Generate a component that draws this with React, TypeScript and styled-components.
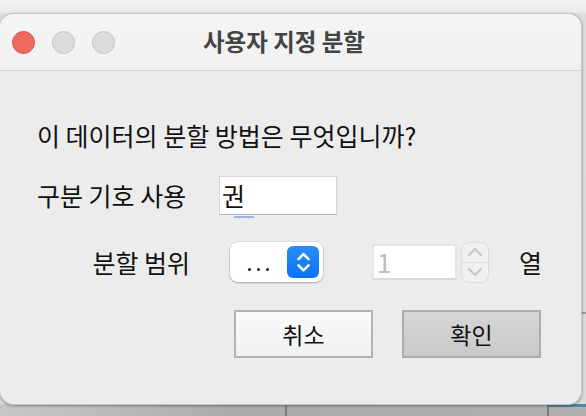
import styled, { createGlobalStyle } from 'styled-components';

const GlobalStyle = createGlobalStyle`
  html, body {
    margin: 0;
    padding: 0;
  }
  body {
    width: 586px;
    height: 416px;
    overflow: hidden;
    font-family: 'Noto Sans CJK KR', 'Noto Sans', sans-serif;
  }
`;

const Desktop = styled.div`
  width: 586px;
  height: 416px;
  display: flex;
  flex-direction: column;
  background:
    linear-gradient(to bottom, transparent 312px, #9a9a9a 312px, #9a9a9a 314px, transparent 314px),
    linear-gradient(to bottom, #f4f4f4 0, #e9e9e9 13px, #dcdcdc 14px, #dadada 100%);
`;

const TopGap = styled.div`
  height: 13px;
  flex: none;
`;

const Window = styled.div`
  width: 582px;
  height: 392px;
  flex: none;
  box-sizing: border-box;
  border: 1px solid #c4c4c4;
  border-left: none;
  border-radius: 14px;
  background: #ececec;
  overflow: hidden;
  display: flex;
  flex-direction: column;
  box-shadow: 0 1px 3px rgba(0, 0, 0, 0.35);
  position: relative;
  z-index: 1;
`;

const TitleBar = styled.div`
  height: 57px;
  flex: none;
  box-sizing: border-box;
  background: linear-gradient(to bottom, #f5f5f5, #f1f1f1);
  border-bottom: 1px solid #d2d2d2;
  display: flex;
  align-items: center;
  padding-left: 12px;
`;

const Lights = styled.div`
  display: flex;
  gap: 17px;
  padding-top: 1px;
`;

const Light = styled.span<{ $color: string; $edge: string }>`
  width: 23px;
  height: 23px;
  border-radius: 50%;
  box-sizing: border-box;
  background: ${(p) => p.$color};
  border: 1px solid ${(p) => p.$edge};
`;

const Title = styled.div`
  flex: 1;
  text-align: center;
  font-size: 23.5px;
  font-weight: 700;
  color: #444;
  margin-left: -128px;
  line-height: 1;
`;

const Body = styled.div`
  flex: 1;
  display: flex;
  flex-direction: column;
  padding: 40px 0 0 37px;
  color: #111;
  font-size: 25px;
`;

const Question = styled.div`
  height: 48px;
  line-height: 48px;
`;

const FormRow = styled.div<{ $height: number }>`
  display: flex;
  align-items: center;
  height: ${(p) => p.$height}px;
`;

const Label = styled.div<{ $width: number; $align?: string }>`
  width: ${(p) => p.$width}px;
  text-align: ${(p) => p.$align || 'left'};
  line-height: 1;
  flex: none;
`;

const TextField = styled.div`
  width: 118px;
  height: 39px;
  box-sizing: border-box;
  background: #fff;
  border: 1px solid #d6d6d6;
  border-bottom-color: #b9b9b9;
  padding-left: 2px;
  display: flex;
  align-items: center;
  margin-top: 1px;
`;

const Marked = styled.span`
  line-height: 1;
  color: #111;
  position: relative;
  &::after {
    content: '';
    position: absolute;
    left: 12px;
    width: 20px;
    bottom: -10px;
    height: 2px;
    background: #9ab4e6;
  }
`;

const Popup = styled.div`
  width: 93px;
  height: 40px;
  box-sizing: border-box;
  background: #fff;
  border-radius: 8px;
  box-shadow: 0 0 0 0.5px rgba(0, 0, 0, 0.12), 0 1px 2px rgba(0, 0, 0, 0.25);
  display: flex;
  align-items: center;
  justify-content: space-between;
  padding: 0 4px 0 18px;
  margin-left: 40px;
  flex: none;
`;

const Dots = styled.span`
  display: flex;
  gap: 6px;
  padding-top: 14px;
  & > i {
    width: 3px;
    height: 3px;
    border-radius: 50%;
    background: #222;
  }
`;

const BlueStepper = styled.span`
  width: 32px;
  height: 32px;
  border-radius: 6px;
  background: linear-gradient(to bottom, #2b8bfb, #0a74f5);
  display: flex;
  align-items: center;
  justify-content: center;
`;

const NumberField = styled.div`
  width: 85px;
  height: 36px;
  box-sizing: border-box;
  background: #fff;
  border: 2px solid #e6e6e6;
  border-bottom-color: #dadada;
  color: #bdbdbd;
  font-size: 26px;
  padding-left: 3px;
  display: flex;
  align-items: center;
  line-height: 1;
  margin-left: 49px;
  flex: none;
`;

const Stepper = styled.div`
  width: 28px;
  height: 41px;
  box-sizing: border-box;
  border: 1px solid #dddddd;
  border-radius: 8px;
  background: #f0f0f0;
  display: flex;
  flex-direction: column;
  margin-left: 4px;
  flex: none;
  & > span {
    flex: 1;
    display: flex;
    align-items: center;
    justify-content: center;
  }
  & > span + span {
    border-top: 1px solid #dcdcdc;
  }
`;

const Unit = styled.div`
  margin-left: 30px;
  line-height: 1;
`;

const ButtonRow = styled.div`
  display: flex;
  gap: 29px;
  padding-left: 197px;
  margin-top: 17px;
`;

const Button = styled.div<{ $primary?: boolean }>`
  width: 139px;
  height: 48px;
  box-sizing: border-box;
  border: 2px solid ${(p) => (p.$primary ? '#adadad' : '#b3b3b3')};
  background: ${(p) =>
    p.$primary ? 'linear-gradient(to bottom, #d6d6d6, #c9c9c9)' : 'linear-gradient(to bottom, #fafafa, #f1f1f1)'};
  display: flex;
  align-items: center;
  justify-content: center;
  font-size: 23px;
  color: #111;
  line-height: 1;
`;

const BottomStrip = styled.div`
  flex: 1;
  margin-top: -1px;
  display: grid;
  grid-template-columns: 285px 262px 1fr;
  background: linear-gradient(to right, #c8c8c8, #ababab 40%, #b0b0b0);
  & > div + div {
    border-left: 2px solid #7d7d7d;
  }
  & > div:last-child {
    background: linear-gradient(to bottom, #4d86a8 0, #4d86a8 3px, transparent 3px);
  }
`;

function Chevrons({ color, size }: { color: string; size: number }) {
  return (
    <svg width={size} height={size * 1.5} viewBox="0 0 12 18" fill="none">
      <path d="M2 6.5 6 2.5l4 4M2 11.5 6 15.5l4-4" stroke={color} strokeWidth="2" strokeLinecap="round" strokeLinejoin="round" />
    </svg>
  );
}

function Chevron({ up }: { up?: boolean }) {
  return (
    <svg width="16" height="10" viewBox="0 0 16 10" fill="none">
      <path d={up ? 'M2 8 8 2l6 6' : 'M2 2l6 6 6-6'} stroke="#c6c6c6" strokeWidth="2" strokeLinecap="round" strokeLinejoin="round" />
    </svg>
  );
}

export default function App() {
  return (
    <>
      <GlobalStyle />
      <Desktop>
        <TopGap />
        <Window>
          <TitleBar>
            <Lights>
              <Light $color="#ee6a5e" $edge="#d5584d" />
              <Light $color="#dcdcdc" $edge="#c6c6c6" />
              <Light $color="#dcdcdc" $edge="#c6c6c6" />
            </Lights>
            <Title>사용자 지정 분할</Title>
          </TitleBar>
          <Body>
            <Question>이 데이터의 분할 방법은 무엇입니까?</Question>
            <FormRow $height={72}>
              <Label $width={182}>구분 기호 사용</Label>
              <TextField>
                <Marked>권</Marked>
              </TextField>
            </FormRow>
            <FormRow $height={62}>
              <Label $width={153} $align="right">
                분할 범위
              </Label>
              <Popup>
                <Dots>
                  <i />
                  <i />
                  <i />
                </Dots>
                <BlueStepper>
                  <Chevrons color="#fff" size={15} />
                </BlueStepper>
              </Popup>
              <NumberField>1</NumberField>
              <Stepper>
                <span>
                  <Chevron up />
                </span>
                <span>
                  <Chevron />
                </span>
              </Stepper>
              <Unit>열</Unit>
            </FormRow>
            <ButtonRow>
              <Button>취소</Button>
              <Button $primary>확인</Button>
            </ButtonRow>
          </Body>
        </Window>
        <BottomStrip>
          <div />
          <div />
          <div />
        </BottomStrip>
      </Desktop>
    </>
  );
}
